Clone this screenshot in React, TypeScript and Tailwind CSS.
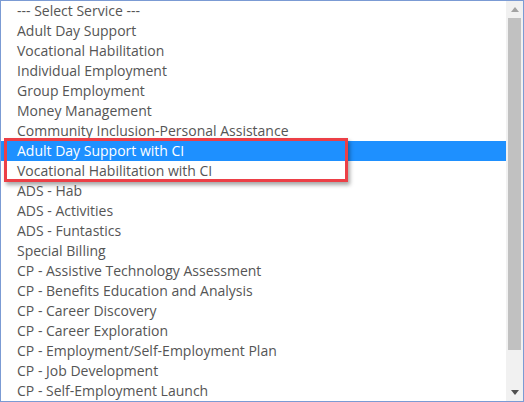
import React from "react";

const items = [
  "--- Select Service ---",
  "Adult Day Support",
  "Vocational Habilitation",
  "Individual Employment",
  "Group Employment",
  "Money Management",
  "Community Inclusion-Personal Assistance",
  "Adult Day Support with CI",
  "Vocational Habilitation with CI",
  "ADS - Hab",
  "ADS - Activities",
  "ADS - Funtastics",
  "Special Billing",
  "CP - Assistive Technology Assessment",
  "CP - Benefits Education and Analysis",
  "CP - Career Discovery",
  "CP - Career Exploration",
  "CP - Employment/Self-Employment Plan",
  "CP - Job Development",
  "CP - Self-Employment Launch",
];

export default function App() {
  return (
    <div className="relative w-[524px] h-[402px] bg-white border border-[#7b9bd4] flex overflow-hidden" style={{ fontFamily: '"Open Sans", sans-serif' }}>
      <div className="flex-1 flex flex-col">
        {items.map((t, i) => (
          <div
            key={i}
            className={
              "h-[20px] shrink-0 pl-[16px] text-[14px] leading-[20px] whitespace-nowrap " +
              (i === 7 ? "bg-[#1e90ff] text-white" : "text-[#555555]")
            }
          >
            {t}
          </div>
        ))}
      </div>
      <div className="w-[17px] bg-[#f1f1f1] flex flex-col items-center">
        <div className="h-[17px] w-full flex items-center justify-center">
          <svg width="8" height="5" viewBox="0 0 8 5"><polygon points="4,0 8,5 0,5" fill="#a3a3a3" /></svg>
        </div>
        <div className="w-[13px] h-[332px] bg-[#c1c1c1]" />
        <div className="flex-1" />
        <div className="h-[17px] w-full flex items-center justify-center">
          <svg width="8" height="5" viewBox="0 0 8 5"><polygon points="0,0 8,0 4,5" fill="#505050" /></svg>
        </div>
      </div>
      <div className="absolute left-[3px] top-[137px] w-[344px] h-[44px] border-[3px] border-[#ec3f46] shadow-[2px_3px_4px_rgba(0,0,0,0.35)]" />
    </div>
  );
}
